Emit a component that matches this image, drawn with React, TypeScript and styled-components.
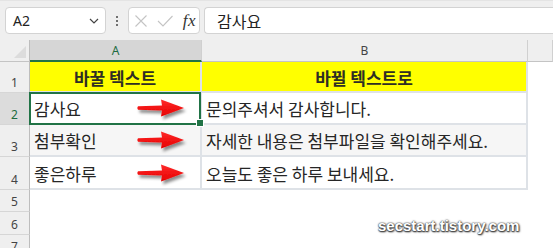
import React from "react";
import styled, { createGlobalStyle } from "styled-components";

const Global = createGlobalStyle`
  html, body { margin: 0; padding: 0; background: #ffffff; }
  body { font-family: "Noto Sans", "Noto Sans CJK KR", sans-serif; overflow: hidden; }
  * { box-sizing: border-box; }
`;

const Page = styled.div`
  width: 553px;
  height: 248px;
  position: relative;
  overflow: hidden;
  background: #ffffff;
`;

const Toolbar = styled.div`
  height: 40px;
  display: flex;
  align-items: flex-start;
  padding: 6px 0 0 5px;
  background: #efefef;
  border-top: 1px solid #e4e4e4;
`;

const Box = styled.div<{ $w?: number; $grow?: boolean }>`
  height: 27px;
  background: #ffffff;
  border: 1px solid #d3d3d3;
  border-radius: 4px;
  display: flex;
  align-items: center;
  ${(p) => (p.$w ? `width: ${p.$w}px; flex: none;` : "")}
  ${(p) => (p.$grow ? "flex: 1; border-right: none; border-radius: 4px 0 0 4px;" : "")}
`;

const NameText = styled.span`
  font-family: "Noto Sans", sans-serif;
  font-size: 14px;
  color: #222;
  padding-left: 7px;
  flex: 1;
`;

const Chevron = styled.svg`
  margin-right: 6px;
`;

const Dots = styled.div`
  width: 22px;
  height: 27px;
  display: flex;
  flex-direction: column;
  align-items: center;
  justify-content: center;
  gap: 2px;
  span {
    width: 2px;
    height: 2px;
    background: #444;
    border-radius: 1px;
  }
`;

const FxBox = styled(Box)`
  padding: 0 3px 0 5px;
  justify-content: space-between;
  margin-right: 4px;
`;

const Fx = styled.span`
  font-family: "Liberation Serif", serif;
  font-style: italic;
  font-size: 17px;
  color: #333;
  letter-spacing: 0.5px;
`;

const FormulaText = styled.span`
  font-family: "Noto Sans CJK KR", sans-serif;
  font-size: 16px;
  color: #222;
  padding-left: 12px;
  line-height: 1;
`;

const Sheet = styled.div`
  display: grid;
  grid-template-columns: 30px 172px 326px 1fr;
  grid-template-rows: 22px 31px 32px 32px 33px 22px 23px 22px;
`;

const Corner = styled.div`
  background: #efefef;
  border-right: 1px solid #bdbdbd;
  border-bottom: 1px solid #c4c4c4;
  position: relative;
  &::after {
    content: "";
    position: absolute;
    right: 3px;
    bottom: 3px;
    width: 0;
    height: 0;
    border-left: 12px solid transparent;
    border-bottom: 12px solid #dcdcdc;
  }
`;

const ColHeader = styled.div<{ $sel?: boolean }>`
  background: ${(p) => (p.$sel ? "#d6d6d6" : "#efefef")};
  color: ${(p) => (p.$sel ? "#1d6b3f" : "#444")};
  border-right: 1px solid #d0d0d0;
  border-bottom: ${(p) => (p.$sel ? "2px solid #217346" : "1px solid #c4c4c4")};
  display: flex;
  align-items: center;
  justify-content: center;
  font-family: "Noto Sans", sans-serif;
  font-size: 12px;
  padding-top: ${(p) => (p.$sel ? "1px" : "0")};
`;

const RowHeader = styled.div<{ $sel?: boolean }>`
  background: ${(p) => (p.$sel ? "#dcdcdc" : "#efefef")};
  color: ${(p) => (p.$sel ? "#1d6b3f" : "#444")};
  border-right: 1px solid #bdbdbd;
  border-bottom: 1px solid #d6d6d6;
  display: flex;
  align-items: flex-end;
  justify-content: center;
  padding-bottom: 3px;
  font-family: "Noto Sans", sans-serif;
  font-size: 12px;
  line-height: 1;
`;

const Cell = styled.div<{ $bg?: string; $head?: boolean; $sel?: boolean }>`
  position: relative;
  background: ${(p) => p.$bg || "#ffffff"};
  border-right: 2px solid #dee2e7;
  border-bottom: 2px solid #dee2e7;
  display: flex;
  align-items: center;
  justify-content: ${(p) => (p.$head ? "center" : "flex-start")};
  padding: 1px 4px 0;
  font-family: "Noto Sans CJK KR", sans-serif;
  font-size: 17px;
  font-weight: ${(p) => (p.$head ? 700 : 400)};
  color: ${(p) => (p.$head ? "#2e2e24" : "#262626")};
  white-space: nowrap;
  ${(p) =>
    p.$sel
      ? `
    &::before {
      content: "";
      position: absolute;
      left: -1px; top: -1px; right: -1px; bottom: -2px;
      border: 2px solid #217346;
      z-index: 2;
      pointer-events: none;
    }
    &::after {
      content: "";
      position: absolute;
      right: -4px; bottom: -4px;
      width: 6px; height: 6px;
      background: #217346;
      border: 1px solid #ffffff;
      z-index: 3;
    }
  `
      : ""}
`;

const Blank = styled.div<{ $span?: boolean }>`
  background: #ffffff;
  ${(p) => (p.$span ? "grid-column: 2 / -1;" : "")}
`;

const ArrowWrap = styled.svg`
  position: absolute;
  left: 105px;
  top: 50%;
  transform: translateY(-50%);
  overflow: visible;
`;

const Watermark = styled.div`
  position: absolute;
  left: 378px;
  top: 217px;
  font-family: "Liberation Sans", Arial, sans-serif;
  font-weight: 700;
  font-size: 15px;
  color: #ffffff;
  text-shadow: 0 0 1px #444, 0 0 2px #555, 1px 1px 2px #333, 0 1px 1px #666;
`;

const Arrow: React.FC<{ id: string }> = ({ id }) => (
  <ArrowWrap width="56" height="24" viewBox="0 0 56 24">
    <defs>
      <filter id={id} x="-20%" y="-40%" width="150%" height="200%">
        <feDropShadow dx="2" dy="3" stdDeviation="1.6" floodColor="#000" floodOpacity="0.45" />
      </filter>
      <linearGradient id={id + "g"} x1="0" y1="0" x2="0" y2="1">
        <stop offset="0" stopColor="#ff2a2a" />
        <stop offset="1" stopColor="#e60000" />
      </linearGradient>
    </defs>
    <g filter={`url(#${id})`}>
      <path
        d="M3 10.2 L27 9.6 L26 3.5 L49 12 L26 20.5 L27 14.4 L3 13.8 Q1.5 12 3 10.2 Z"
        fill={`url(#${id}g)`}
      />
    </g>
  </ArrowWrap>
);

const rows = [
  { n: 2, a: "감사요", b: "문의주셔서 감사합니다.", bg: "#ffffff", sel: true },
  { n: 3, a: "첨부확인", b: "자세한 내용은 첨부파일을 확인해주세요.", bg: "#f6f6f6", sel: false },
  { n: 4, a: "좋은하루", b: "오늘도 좋은 하루 보내세요.", bg: "#ffffff", sel: false },
];

export default function App() {
  return (
    <Page>
      <Global />
      <Toolbar>
        <Box $w={101}>
          <NameText>A2</NameText>
          <Chevron width="10" height="6" viewBox="0 0 10 6">
            <path d="M1 1 L5 5 L9 1" fill="none" stroke="#444" strokeWidth="1.2" />
          </Chevron>
        </Box>
        <Dots>
          <span />
          <span />
          <span />
        </Dots>
        <FxBox $w={72}>
          <svg width="14" height="14" viewBox="0 0 14 14">
            <path d="M1.5 1.5 L12.5 12.5 M12.5 1.5 L1.5 12.5" stroke="#c4c4c4" strokeWidth="1.1" fill="none" />
          </svg>
          <svg width="16" height="12" viewBox="0 0 16 12">
            <path d="M1 6 L6 11 L15.5 1" stroke="#c4c4c4" strokeWidth="1.1" fill="none" />
          </svg>
          <Fx>fx</Fx>
        </FxBox>
        <Box $grow>
          <FormulaText>감사요</FormulaText>
        </Box>
      </Toolbar>
      <Sheet>
        <Corner />
        <ColHeader $sel>A</ColHeader>
        <ColHeader>B</ColHeader>
        <ColHeader />

        <RowHeader>1</RowHeader>
        <Cell $bg="#ffff00" $head>바꿀 텍스트</Cell>
        <Cell $bg="#ffff00" $head>바뀔 텍스트로</Cell>
        <Blank />

        {rows.map((r) => (
          <React.Fragment key={r.n}>
            <RowHeader $sel={r.sel}>{r.n}</RowHeader>
            <Cell $bg={r.bg} $sel={r.sel}>
              {r.a}
              <Arrow id={`ar${r.n}`} />
            </Cell>
            <Cell $bg={r.bg}>{r.b}</Cell>
            <Blank />
          </React.Fragment>
        ))}

        <RowHeader>5</RowHeader>
        <Blank $span />
        <RowHeader>6</RowHeader>
        <Blank $span />
        <RowHeader>7</RowHeader>
        <Blank $span />
      </Sheet>
      <Watermark>secstart.tistory.com</Watermark>
    </Page>
  );
}
